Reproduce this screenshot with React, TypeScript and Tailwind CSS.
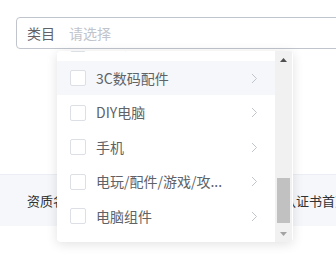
import React from 'react';

// category cascader — first column of the popper, scrolled a bit
const items = ['电脑办公', '3C数码配件', 'DIY电脑', '手机', '电玩/配件/游戏/攻...', '电脑组件'];

function Chevron() {
    return (
        <svg width="7" height="11" viewBox="0 0 7 11" fill="none">
            <path d="M1 1l4.5 4.5L1 10" stroke="#c0c4cc" strokeWidth="1" />
        </svg>
    );
}

function Row({ label, active }: { label: string; active?: boolean }) {
    return (
        <div className={`h-[34.5px] flex items-center pl-[13px] pr-[17px] ${active ? 'bg-[#f5f7fa]' : 'bg-white'}`}>
            <span className="w-4 h-4 shrink-0 rounded-[2px] border border-[#dcdfe6] bg-white" />
            <span className="ml-[10px] text-[14px] text-[#606266] whitespace-nowrap">{label}</span>
            <span className="ml-auto flex items-center">
                <Chevron />
            </span>
        </div>
    );
}

export default function App() {
    return (
        <div
            className="relative w-[336px] h-[276px] overflow-hidden bg-white"
            style={{ fontFamily: '"Noto Sans CJK SC", "Noto Sans", sans-serif' }}
        >
            {/* select input */}
            <div className="pt-[17px] pl-4">
                <div className="w-[400px] h-8 rounded-[4px] border border-[#c0c4cc] flex items-center pl-[10px] text-[14px]">
                    <span className="text-[#606266]">类目</span>
                    <span className="ml-[14px] text-[#c0c4cc]">请选择</span>
                </div>
            </div>

            {/* table header behind */}
            <div className="mt-[125px] h-[52px] bg-[#f5f7fa] border-t border-[#ebeef5] flex items-center pl-[27px] text-[13px] text-[#303133] whitespace-nowrap">
                <span>资质名称</span>
                <span className="ml-[204px]">认证书首页</span>
            </div>

            {/* dropdown popper */}
            <div className="absolute left-[57px] top-[51px] w-[236px] h-[191px] rounded-[4px] bg-white shadow-[0_2px_12px_0_rgba(0,0,0,0.12)] overflow-hidden flex">
                <div className="w-[218px] overflow-hidden">
                    <div className="mt-[-24.75px]">
                        {items.map((it, i) => (
                            <Row key={it} label={it} active={i === 1} />
                        ))}
                    </div>
                </div>
                <div className="w-[17px] bg-[#f1f1f1] flex flex-col items-center">
                    <div className="h-[17px] w-full flex items-center justify-center">
                        <svg width="7" height="4" viewBox="0 0 7 4">
                            <path d="M0 4L3.5 0 7 4z" fill="#505050" />
                        </svg>
                    </div>
                    <div className="mt-[110px] w-[13px] h-[45px] bg-[#c1c1c1]" />
                    <div className="mt-auto h-[17px] w-full flex items-center justify-center">
                        <svg width="7" height="4" viewBox="0 0 7 4">
                            <path d="M0 0h7L3.5 4z" fill="#a3a3a3" />
                        </svg>
                    </div>
                </div>
            </div>
        </div>
    );
}
